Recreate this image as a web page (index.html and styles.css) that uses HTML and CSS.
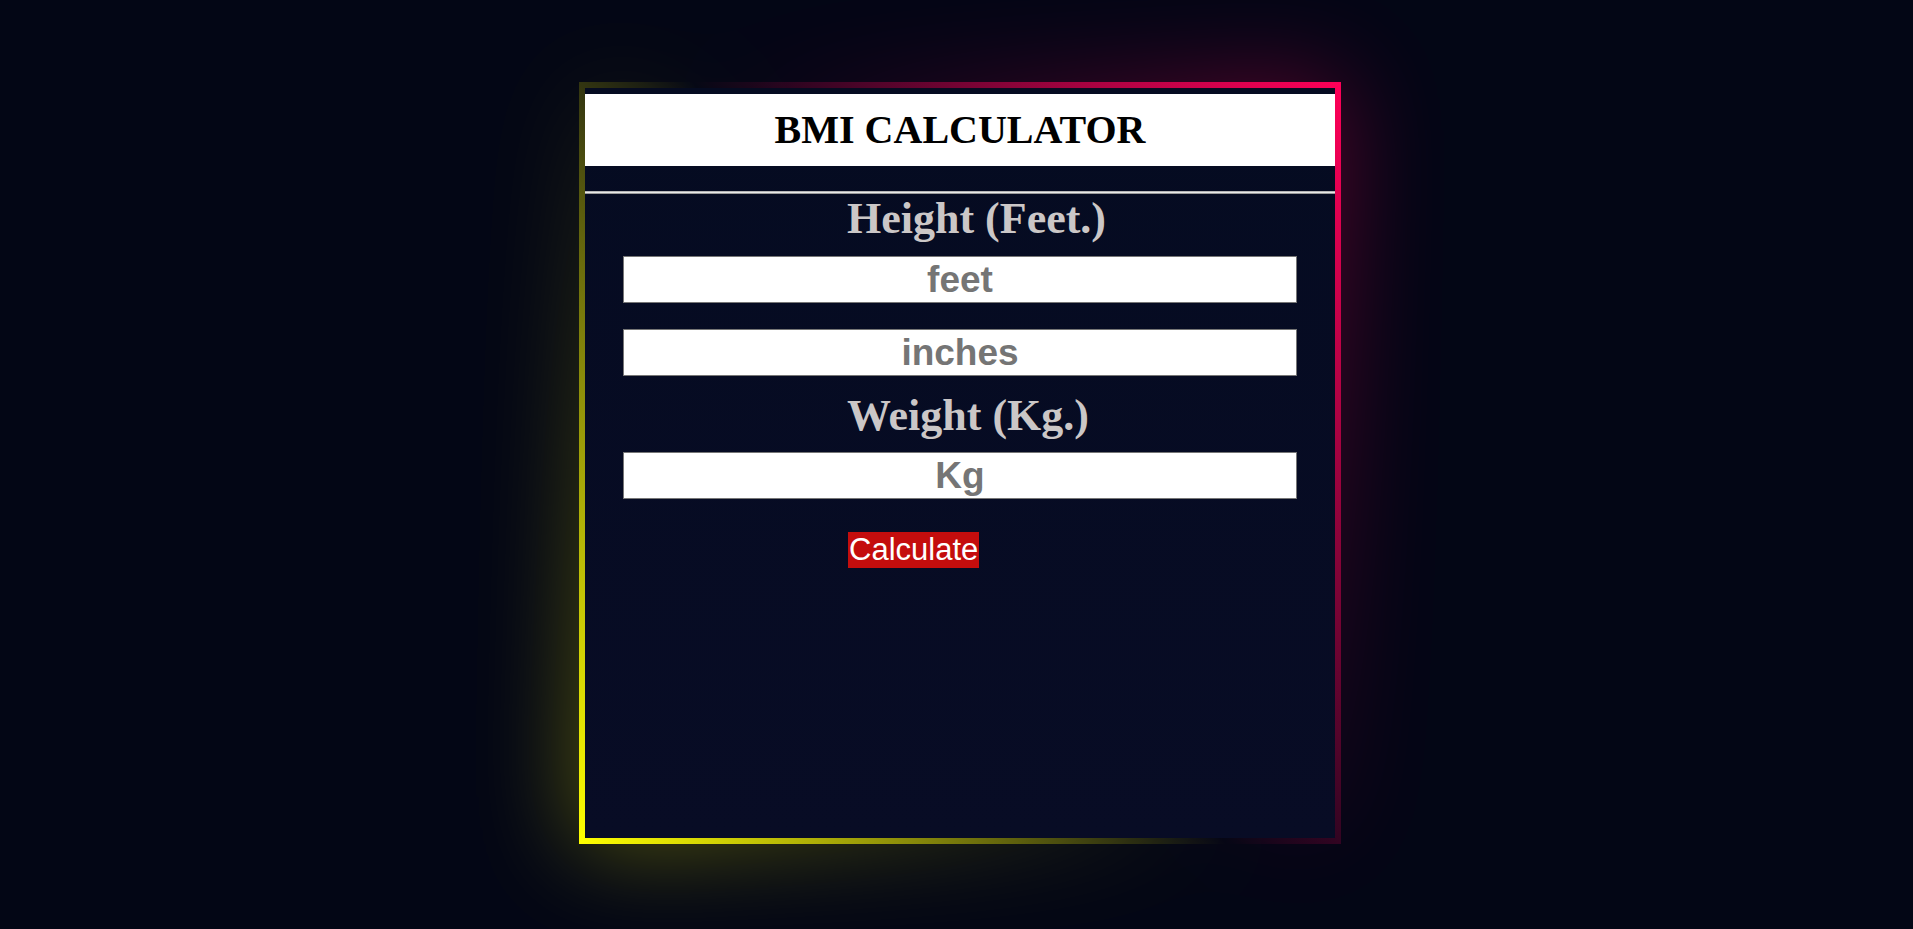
FILE: index.html
```html
<!DOCTYPE html>
<html lang="en">
<head>
<meta charset="utf-8">
<title>BMI Calculator</title>
<link rel="stylesheet" href="styles.css">
</head>
<body>
<div class="page">
  <div class="frame">
    <div class="card">
      <div class="title"><h1>BMI CALCULATOR</h1></div>
      <hr class="rule">
      <div class="form">
        <h2 class="label">Height (Feet.)</h2>
        <input class="field first" type="text" placeholder="feet">
        <input class="field second" type="text" placeholder="inches">
        <h2 class="label weight">Weight (Kg.)</h2>
        <input class="field third" type="text" placeholder="Kg">
        <button class="calc" type="button">Calculate</button>
      </div>
    </div>
  </div>
</div>
</body>
</html>
```
FILE: styles.css
```css
html {
  background: #030615;
}

body {
  margin: 0;
  padding: 0;
}

.page {
  min-height: 100vh;
  box-sizing: border-box;
  display: flex;
  align-items: center;
  justify-content: center;
  padding-left: 7px;
  padding-bottom: 3px;
}

.frame {
  position: relative;
  padding: 6px;
  background: linear-gradient(55deg, #ffff00 0%, rgba(255, 255, 0, 0) 50%, rgba(255, 0, 88, 0) 50%, #ff0058 100%);
}

.frame::before {
  content: "";
  position: absolute;
  inset: 0;
  background: linear-gradient(55deg, #ffff00 0%, rgba(255, 255, 0, 0) 50%, rgba(255, 0, 88, 0) 50%, #ff0058 100%);
  filter: blur(50px);
  opacity: 0.4;
  z-index: -1;
}

.card {
  width: 750px;
  height: 750px;
  background: linear-gradient(180deg, #050b21 0%, #080c25 100%);
  display: flex;
  flex-direction: column;
}

.title {
  margin-top: 6px;
  height: 72px;
  background: #ffffff;
  display: flex;
  align-items: center;
  justify-content: center;
}

.title h1 {
  margin: 0;
  font-family: "Liberation Serif", "Times New Roman", serif;
  font-weight: bold;
  font-size: 40px;
  line-height: 44px;
  color: #000000;
}

.rule {
  margin: 25px 0 0;
  border: 0;
  border-top: 1px solid #b5b5b5;
  border-bottom: 1px solid #9a9a9a;
  height: 1px;
  background: #e8e8e8;
}

.form {
  display: flex;
  flex-direction: column;
  align-items: flex-start;
}

.label {
  margin: 0 0 0 262px;
  font-family: "Liberation Serif", "Times New Roman", serif;
  font-weight: bold;
  font-size: 44px;
  line-height: 49px;
  color: #cbc7c7;
}

.label.weight {
  margin-top: 15px;
}

.field {
  align-self: center;
  box-sizing: border-box;
  width: 674px;
  height: 47px;
  border: 1px solid #767676;
  background: #ffffff;
  padding: 0 2px;
  font-family: "Liberation Sans", Arial, sans-serif;
  font-weight: bold;
  font-size: 37px;
  text-align: center;
  color: #333;
}

.field::placeholder {
  color: #757575;
  opacity: 1;
}

.field.first {
  margin-top: 13px;
}

.field.second {
  margin-top: 26px;
}

.field.third {
  margin-top: 12px;
}

.calc {
  margin: 33px 0 0 263px;
  height: 36px;
  padding: 0 1px;
  border: 0;
  background: #c40d0d;
  color: #ffffff;
  font-family: "Liberation Sans", Arial, sans-serif;
  font-size: 31px;
  line-height: 36px;
}
```
